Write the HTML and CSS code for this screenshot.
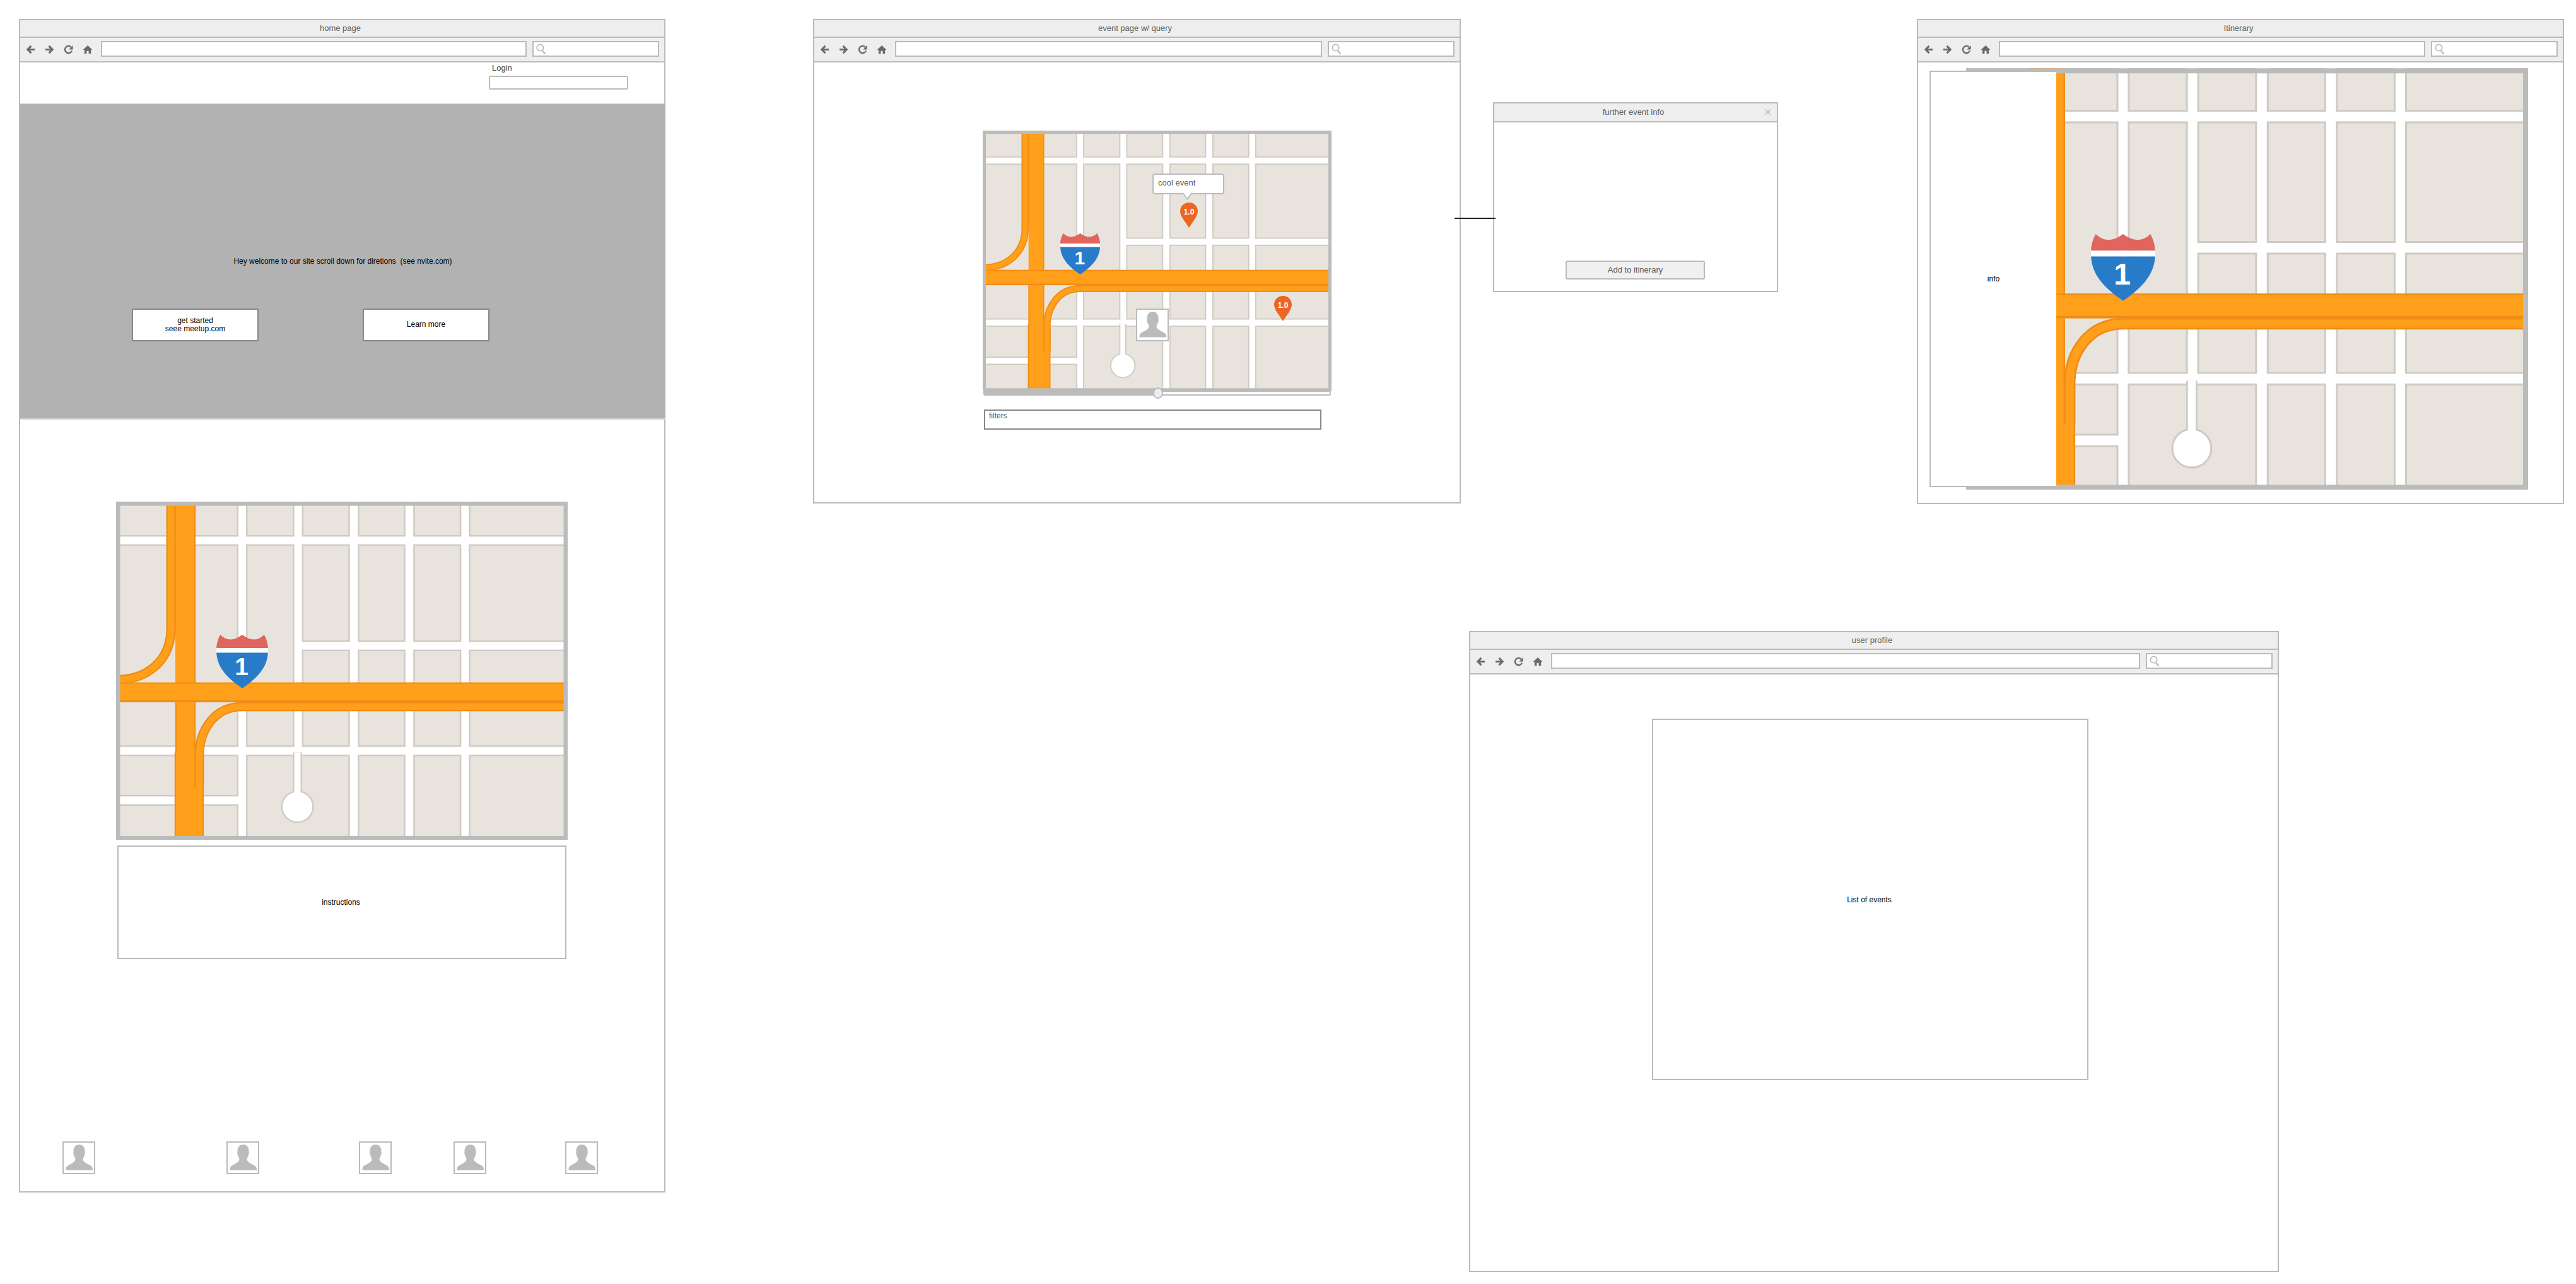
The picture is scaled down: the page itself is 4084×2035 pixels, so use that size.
FILE: index.html
```html
<!DOCTYPE html>
<html lang="en">
<head>
<meta charset="utf-8">
<title>Wireframes</title>
<link rel="stylesheet" href="styles.css">
</head>
<body>
<svg class="defs" width="0" height="0" aria-hidden="true">
  <defs>
    <g id="mapbase">
      <rect class="m-bg" x="60" y="40" width="1460" height="1110"/>
      <g class="m-block">
        <rect x="70" y="50" width="385.5" height="110.5"/>
        <rect x="484.5" y="50" width="149" height="110.5"/>
        <rect x="662.5" y="50" width="148" height="110.5"/>
        <rect x="840.5" y="50" width="147" height="110.5"/>
        <rect x="1017.5" y="50" width="148" height="110.5"/>
        <rect x="1194.5" y="50" width="320" height="110.5"/>
        <rect x="70" y="190.5" width="385.5" height="649"/>
        <rect x="484.5" y="190.5" width="149" height="649"/>
        <rect x="662.5" y="190.5" width="148" height="310"/>
        <rect x="840.5" y="190.5" width="147" height="310"/>
        <rect x="1017.5" y="190.5" width="148" height="310"/>
        <rect x="1194.5" y="190.5" width="320" height="310"/>
        <rect x="662.5" y="530.5" width="148" height="309"/>
        <rect x="840.5" y="530.5" width="147" height="309"/>
        <rect x="1017.5" y="530.5" width="148" height="309"/>
        <rect x="1194.5" y="530.5" width="320" height="309"/>
        <rect x="70" y="869.5" width="385.5" height="130"/>
        <rect x="70" y="1029.5" width="385.5" height="115"/>
        <rect x="484.5" y="869.5" width="326" height="275"/>
        <rect x="840.5" y="869.5" width="147" height="275"/>
        <rect x="1017.5" y="869.5" width="148" height="275"/>
        <rect x="1194.5" y="869.5" width="320" height="275"/>
      </g>
      <path class="m-cul-edge" d="M646 860V1000"/>
      <circle class="m-cul" cx="646" cy="1035" r="50"/>
      <path class="m-cul-in" d="M646 860V1010"/>
      <rect class="m-hw" x="257" y="40" width="64" height="840"/>
      <rect class="m-hw" x="255" y="860" width="92" height="290"/>
      <path class="m-edge" d="M258.500 698V860M319.500 40V640M319.500 698V870M345.500 870V1150M256.500 860V1150"/>
      <path class="m-ramp-o" d="M243 40V460C243 560 170 625 70 625"/>
      <path class="m-ramp-i" d="M243 40V460C243 560 170 625 70 625"/>
      <path class="m-ramp-o" d="M1510 712H470C380 712 333 790 333 870V973"/>
      <path class="m-ramp-i" d="M1510 712H470C380 712 333 790 333 870V985"/>
      <rect class="m-hw" x="70" y="634" width="1440" height="64"/>
      <path class="m-edge" d="M70 636H1510"/>
      <path class="m-edge-b" d="M70 695H1510"/>
      <path class="s-red" d="M400 480Q430 510 470 480Q510 510 540 480C548 495 552 510 552 523H388C388 510 392 495 400 480Z"/>
      <rect class="s-white" x="388" y="523" width="164" height="15"/>
      <path class="s-blue" d="M388 538C390 590 430 625 470 653C510 625 550 590 552 538Z"/>
      <rect class="m-frame" x="74.500" y="57" width="1426" height="1079"/>
    </g>
    <symbol id="i-back" viewBox="0 0 16 16"><path class="i-stroke" d="M15 8H3M9 2L3 8L9 14"/></symbol>
    <symbol id="i-fwd" viewBox="0 0 16 16"><path class="i-stroke" d="M1 8H13M7 2L13 8L7 14"/></symbol>
    <symbol id="i-reload" viewBox="0 0 16 16"><path class="i-arc" d="M13 4.500A6 6 0 1 0 13.800 10"/><path class="i-fill" d="M15.500 1V8H9Z"/></symbol>
    <symbol id="i-home" viewBox="0 0 16 16"><path class="i-fill" d="M8 1L16 8.500H13.500V15H9.700V10.500H6.300V15H2.500V8.500H0Z"/></symbol>
    <symbol id="i-search" viewBox="0 0 16 17"><circle class="i-search" cx="6.500" cy="6.500" r="5.200"/><path class="i-search-h" d="M10 11.500L14.500 16.500"/></symbol>
    <symbol id="i-person" viewBox="2 2 48 48"><path class="i-person" d="M26.500 5C32 5 35.500 9 35.500 15C35.500 17 36.200 19 35.200 21C34.600 24 32.500 26 32.500 28.500C32.500 32 38 35 44 38C47 39.500 48 41 48 45.500H5.500C5.500 41 6.500 39.500 9.500 38C15 35 20.500 32 20.500 28.500C20.500 26 18.500 24 17.800 21C16.800 19 17.500 17 17.500 15C17.500 9 21 5 26.500 5Z"/></symbol>
  </defs>
</svg>

<main class="canvas">

  <section class="win win-home">
    <header class="titlebar">home page</header>
    <div class="toolbar">
      <svg class="ico"><use href="#i-back"/></svg>
      <svg class="ico"><use href="#i-fwd"/></svg>
      <svg class="ico"><use href="#i-reload"/></svg>
      <svg class="ico ico-home"><use href="#i-home"/></svg>
      <div class="address"></div>
      <div class="search"><svg class="ico-search"><use href="#i-search"/></svg></div>
    </div>
    <div class="login">
      <div class="login-label">Login</div>
      <div class="login-input"></div>
    </div>
    <div class="hero">
      <p class="hero-text">Hey welcome to our site scroll down for diretions&nbsp; (see nvite.com)</p>
      <div class="hero-buttons">
        <div class="hero-btn">get started<br>seee meetup.com</div>
        <div class="hero-btn">Learn more</div>
      </div>
    </div>
    <svg class="map map-home" viewBox="68 50 1439 1092" preserveAspectRatio="none">
      <use href="#mapbase"/><text class="shield-num" x="468" y="611">1</text>
    </svg>
    <div class="instructions">instructions</div>
    <div class="people">
      <div class="avatar"><svg class="avatar-img"><use href="#i-person"/></svg></div>
      <div class="avatar avatar-b"><svg class="avatar-img"><use href="#i-person"/></svg></div>
      <div class="avatar avatar-c"><svg class="avatar-img"><use href="#i-person"/></svg></div>
      <div class="avatar avatar-d"><svg class="avatar-img"><use href="#i-person"/></svg></div>
      <div class="avatar avatar-e"><svg class="avatar-img"><use href="#i-person"/></svg></div>
    </div>
  </section>

  <section class="win win-event">
    <header class="titlebar">event page w/ query</header>
    <div class="toolbar">
      <svg class="ico"><use href="#i-back"/></svg>
      <svg class="ico"><use href="#i-fwd"/></svg>
      <svg class="ico"><use href="#i-reload"/></svg>
      <svg class="ico ico-home"><use href="#i-home"/></svg>
      <div class="address"></div>
      <div class="search"><svg class="ico-search"><use href="#i-search"/></svg></div>
    </div>
    <div class="event-body">
      <div class="event-map">
        <svg class="map map-event" viewBox="68 50 1439 1092" preserveAspectRatio="none">
          <use href="#mapbase"/><text class="shield-num" x="468" y="611">1</text>
        </svg>
        <div class="tip">cool event</div>
        <div class="pin pin-a"><svg class="pin-shape" viewBox="0 0 28 40"><path d="M14 0C22 0 28 6 28 14C28 22 18 33 14 40C10 33 0 22 0 14C0 6 6 0 14 0Z"/></svg><span class="pin-label">1.0</span></div>
        <div class="pin pin-b"><svg class="pin-shape" viewBox="0 0 28 40"><path d="M14 0C22 0 28 6 28 14C28 22 18 33 14 40C10 33 0 22 0 14C0 6 6 0 14 0Z"/></svg><span class="pin-label">1.0</span></div>
        <div class="avatar avatar-map"><svg class="avatar-img"><use href="#i-person"/></svg></div>
        <div class="slider"><div class="slider-fill"></div><div class="slider-knob"></div></div>
      </div>
      <div class="filters">filters</div>
    </div>
  </section>

  <div class="connector"></div>

  <section class="win-modal">
    <header class="modal-title"><span>further event info</span><span class="modal-x">&#10005;</span></header>
    <div class="modal-body"><div class="modal-btn">Add to itinerary</div></div>
  </section>

  <section class="win win-itin">
    <header class="titlebar">Itinerary</header>
    <div class="toolbar">
      <svg class="ico"><use href="#i-back"/></svg>
      <svg class="ico"><use href="#i-fwd"/></svg>
      <svg class="ico"><use href="#i-reload"/></svg>
      <svg class="ico ico-home"><use href="#i-home"/></svg>
      <div class="address"></div>
      <div class="search"><svg class="ico-search"><use href="#i-search"/></svg></div>
    </div>
    <div class="itin-body">
      <svg class="map map-itin" viewBox="68 50 1439 1092" preserveAspectRatio="none">
        <use href="#mapbase"/><text class="shield-num" x="468" y="611">1</text>
      </svg>
      <div class="info">info</div>
    </div>
  </section>

  <section class="win win-profile">
    <header class="titlebar">user profile</header>
    <div class="toolbar">
      <svg class="ico"><use href="#i-back"/></svg>
      <svg class="ico"><use href="#i-fwd"/></svg>
      <svg class="ico"><use href="#i-reload"/></svg>
      <svg class="ico ico-home"><use href="#i-home"/></svg>
      <div class="address"></div>
      <div class="search"><svg class="ico-search"><use href="#i-search"/></svg></div>
    </div>
    <div class="events-list">List of events</div>
  </section>

</main>
</body>
</html>
```

FILE: styles.css
```css
* { box-sizing: border-box; }
html, body { margin: 0; padding: 0; background: #fff; }
body { font-family: "Liberation Sans", Arial, sans-serif; font-size: 12px; color: #000; }
.defs { position: absolute; }
.canvas { position: relative; width: 4084px; height: 2035px; overflow: hidden; }

/* windows on the free canvas */
.win { position: absolute; display: flex; flex-direction: column; border: 2px solid #bbb; background: #fff; }
.win-home { left: 30px; top: 30px; width: 1025px; height: 1860px; }
.win-event { left: 1289px; top: 30px; width: 1027px; height: 768px; }
.win-itin { left: 3039px; top: 30px; width: 1026px; height: 769px; }
.win-profile { left: 2329px; top: 1000px; width: 1284px; height: 1016px; }

.titlebar { flex: none; height: 28px; padding-right: 6px; background: #eee; border-bottom: 2px solid #bbb; text-align: center; font-size: 13px; line-height: 26px; color: #5e5e5e; }
.toolbar { flex: none; height: 39px; background: #eee; border-bottom: 2px solid #bbb; display: flex; align-items: flex-start; gap: 15px; padding: 5px 8px 0 9px; }
.ico { flex: none; width: 15px; height: 15px; margin-top: 6px; }
.ico-home { width: 16px; }
.address { flex: 1; height: 25px; background: #fff; border: 2px solid #bbb; margin-left: -2px; }
.search { flex: none; width: 201px; height: 25px; margin-left: -6px; background: #fff; border: 2px solid #bbb; padding: 2px 0 0 4px; }
.ico-search { display: block; width: 16px; height: 17px; }
.i-stroke { fill: none; stroke: #6a6a6a; stroke-width: 3.2; }
.i-arc { fill: none; stroke: #6a6a6a; stroke-width: 2.6; }
.i-fill { fill: #6a6a6a; }
.i-search { fill: none; stroke: #bdbdbd; stroke-width: 1.8; }
.i-search-h { fill: none; stroke: #bdbdbd; stroke-width: 2.6; }
.i-person { fill: #bbb; }

/* home */
.login { flex: none; height: 65px; padding: 2px 0 0 743px; }
.login-label { font-size: 13px; line-height: 14px; color: #444; padding-left: 5px; }
.login-input { width: 221px; height: 22px; margin-top: 5px; border: 2px solid #bbb; border-radius: 3px; background: #fff; }
.hero { flex: none; height: 501px; margin-right: -2px; background: #b2b2b2; border-top: 1px solid #ccc; border-bottom: 2px solid #d4d4d4; display: flex; flex-direction: column; }
.hero-text { margin: 242px 0 0; text-align: center; font-size: 12px; line-height: 14px; }
.hero-buttons { display: flex; gap: 165px; margin: 68px 0 0 177px; }
.hero-btn { width: 201px; height: 52px; background: #fff; border: 2px solid #888; display: flex; align-items: center; justify-content: center; text-align: center; font-size: 12px; line-height: 13.500px; }
.map { display: block; flex: none; }
.map-home { width: 716px; height: 536px; margin: 130px 0 0 152px; }
.instructions { flex: none; width: 712px; height: 180px; margin: 9px 0 0 154px; padding-right: 3px; border: 2px solid #bbb; display: flex; align-items: center; justify-content: center; font-size: 12px; }
.people { flex: none; display: flex; margin: 289px 0 0 67px; }
.avatar { flex: none; width: 52px; height: 52px; background: #fff; border: 2px solid #bbb; }
.avatar-b { margin-left: 208px; }
.avatar-c { margin-left: 158px; }
.avatar-d { margin-left: 98px; }
.avatar-e { margin-left: 125px; }
.avatar-img { display: block; width: 48px; height: 48px; }

/* event page */
.event-body { flex: 1; padding: 108px 0 0 267px; }
.event-map { position: relative; width: 553px; height: 420px; }
.map-event { width: 553px; height: 413px; }
.tip { position: absolute; left: 269px; top: 68px; width: 114px; height: 33px; padding-left: 7px; background: #fff; border: 2px solid #bbb; border-radius: 4px; font-size: 13px; line-height: 25px; color: #5a5a5a; }
.tip::after { content: ""; position: absolute; left: 47px; top: 23px; width: 11px; height: 11px; background: #fff; border-right: 2px solid #bbb; border-bottom: 2px solid #bbb; transform: rotate(45deg) skew(8deg, 8deg); }
.pin { position: absolute; width: 28px; height: 40px; }
.pin-a { left: 313px; top: 114px; }
.pin-b { left: 462px; top: 262px; }
.pin-shape { display: block; width: 28px; height: 40px; fill: #eb6623; }
.pin-label { position: absolute; left: 0; right: 0; top: 8px; text-align: center; font-size: 12px; line-height: 14px; font-weight: 700; color: #fff; }
.avatar-map { position: absolute; left: 243px; top: 282px; }
.slider { position: absolute; left: 1px; top: 412px; width: 551px; height: 8px; background: #fff; border: 2px solid #bbb; border-radius: 3px; }
.slider-fill { position: absolute; left: -2px; top: -2px; width: 280px; height: 8px; background: #bbb; border-radius: 3px 0 0 3px; }
.slider-knob { position: absolute; left: 267px; top: -7px; width: 16px; height: 18px; background: #eee; border: 2px solid #bbb; border-radius: 50%; }
.filters { width: 535px; height: 32px; margin: 22px 0 0 2px; padding: 2px 0 0 6px; border: 2px solid #888; font-size: 12px; line-height: 13px; color: #555; }

/* modal */
.connector { position: absolute; left: 2306px; top: 345px; width: 65px; height: 2px; background: #222; z-index: 2; }
.win-modal { position: absolute; left: 2367px; top: 162px; width: 452px; height: 301px; display: flex; flex-direction: column; border: 2px solid #bbb; background: #fff; }
.modal-title { position: relative; flex: none; height: 30px; padding-right: 7px; background: #eee; border-bottom: 2px solid #bbb; text-align: center; font-size: 13px; line-height: 28px; color: #5e5e5e; }
.modal-x { position: absolute; right: 8px; top: 0; font-size: 15px; color: #bbb; font-family: "DejaVu Sans", sans-serif; }
.modal-body { flex: 1; display: flex; align-items: flex-end; padding: 0 0 18px 113px; }
.modal-btn { width: 221px; height: 30px; background: #f0f0f0; border: 2px solid #bbb; border-radius: 3px; text-align: center; font-size: 13px; line-height: 26px; color: #5a5a5a; }

/* itinerary */
.itin-body { position: relative; flex: 1; padding: 9px 0 0 76px; }
.map-itin { width: 891px; height: 668px; }
.info { position: absolute; left: 18px; top: 13px; width: 201px; height: 660px; background: #fff; border: 2px solid #bbb; border-right: 0; display: flex; align-items: center; justify-content: center; font-size: 12px; }

/* profile */
.events-list { width: 692px; height: 573px; margin: 70px 0 0 288px; padding-right: 3px; border: 2px solid #bbb; display: flex; align-items: center; justify-content: center; font-size: 12px; }

/* map art */
.m-bg { fill: #fff; }
.m-block rect { fill: #e8e4dd; stroke: #cfcbc2; stroke-width: 5; }
.m-cul-edge { fill: none; stroke: #cfcbc2; stroke-width: 29; }
.m-cul { fill: #fff; stroke: #cfcbc2; stroke-width: 5; }
.m-cul-in { fill: none; stroke: #fff; stroke-width: 20; }
.m-hw { fill: #ff9f1a; }
.m-edge { fill: none; stroke: #ee8c17; stroke-width: 4; }
.m-edge-b { fill: none; stroke: #ee8c17; stroke-width: 6; }
.m-ramp-o { fill: none; stroke: #ee8c17; stroke-width: 30; }
.m-ramp-i { fill: none; stroke: #ff9f1a; stroke-width: 21; }
.m-frame { fill: none; stroke: #bbb; stroke-width: 13; }
.s-red { fill: #e0655f; }
.s-white { fill: #fff; }
.s-blue { fill: #277bc9; }
.shield-num { fill: #fff; font-family: "Liberation Sans", Arial, sans-serif; font-size: 78px; font-weight: 700; text-anchor: middle; }
```
